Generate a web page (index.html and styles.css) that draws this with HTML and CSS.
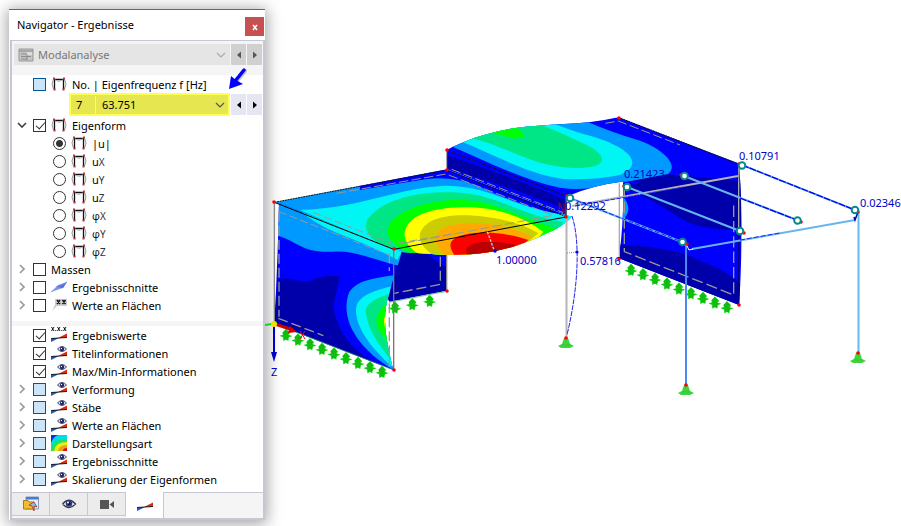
FILE: index.html
```html
<!DOCTYPE html>
<html lang="de">
<head>
<meta charset="utf-8">
<meta name="viewport" content="width=device-width, initial-scale=1">
<title>Navigator - Ergebnisse</title>
<link rel="stylesheet" href="styles.css">
</head>
<body>
<svg class="defs" width="0" height="0" aria-hidden="true">
  <symbol id="frame" viewBox="0 0 16 16">
    <path d="M2.500 3Q-.5 8 2.500 13M13.500 3Q16.500 8 13.500 13" fill="none" stroke="#999"/>
    <path d="M3.500 14V3.500H12.500V14" fill="none" stroke="#111" stroke-width="1.300"/>
    <path d="M4 4Q8 7 12 4" fill="none" stroke="#bbb"/>
    <path d="M2 1.500h2v2H2zM12 1.500h2v2h-2zM2.500 12.500h2v2h-2zM11.500 12.500h2v2h-2z" fill="#c8323c"/>
  </symbol>
  <symbol id="beam" viewBox="0 0 16 16">
    <path d="M0 10H8L0 14z" fill="#2456c8"/><path d="M7 10L16 5.500V10z" fill="#d62c10"/>
    <path d="M0 10.500L16 9.500" stroke="#222"/>
  </symbol>
  <symbol id="eyebeam" viewBox="0 0 16 16">
    <use href="#beam" y="1"/>
    <path d="M6.500 4Q11-1 15.500 4Q11 9 6.500 4" fill="#dde1ee" stroke="#45496c"/>
    <circle cx="11" cy="4" r="2.200" fill="#20275f"/><circle cx="10.500" cy="3.500" r=".7" fill="#fff"/>
  </symbol>
  <symbol id="eye" viewBox="0 0 16 16">
    <path d="M1.500 8Q8 .5 14.500 8Q8 15 1.500 8" fill="#fff" stroke="#333850" stroke-width="1.300"/>
    <circle cx="8" cy="7.500" r="3.300" fill="#303d8d"/><circle cx="8" cy="7.500" r="1.500" fill="#101438"/><circle cx="7" cy="6.500" r="1" fill="#fff"/>
  </symbol>
  <symbol id="plane" viewBox="0 0 16 16"><path d="M0 13L7 6L16 3L12 9z" fill="#809cff"/><path d="M5 8L16 3L12 9z" fill="#536bef"/><path d="M0 13L16 3" stroke="#8a8ca8" stroke-width=".8"/></symbol>
  <symbol id="flag" viewBox="0 0 16 16"><path d="M4 2H16V9H6L1 14L4 8z" fill="#ccc"/><path d="M6 3L9 7M9 3L6 7M11.500 3L14.500 7M14.500 3L11.500 7" stroke="#111" stroke-width="1.400"/></symbol>
  <symbol id="values" viewBox="0 0 16 16"><use href="#beam" y="1"/><path d="M.5 0L3 4M3 0L.5 4M6.500 0L9 4M9 0L6.500 4M12.500 0L15 4M15 0L12.500 4M4.300 3.500h1M10.300 3.500h1" stroke="#111"/></symbol>
  <symbol id="heat" viewBox="0 0 16 16"><path d="M0 0H16V16H0z" fill="#00dce8"/><path d="M0 0H7Q2 2 0 8z" fill="#1030d8"/><path d="M0 16Q0 4 16 4V16z" fill="#20e060"/><path d="M3 16Q4 7 16 7V16z" fill="#ecec10"/><path d="M7 16Q8 10 16 10V16z" fill="#e8a020"/><path d="M12 16Q12 13 16 13V16z" fill="#d81010"/></symbol>
  <symbol id="down" viewBox="0 0 10 10"><path d="M1 3L5 7L9 3" fill="none" stroke="currentColor" stroke-width="1.200"/></symbol>
  <symbol id="left" viewBox="0 0 10 10"><path d="M7 1.500V8.500L3 5z" fill="currentColor"/></symbol>
  <symbol id="right" viewBox="0 0 10 10"><path d="M3 1.500V8.500L7 5z" fill="currentColor"/></symbol>
  <symbol id="twist" viewBox="0 0 10 10"><path d="M3 1L7 5L3 9" fill="none" stroke="currentColor" stroke-width="1.700"/></symbol>
</svg>
<div class="app">
<aside class="panel">
  <header class="title"><h1>Navigator - Ergebnisse</h1><button class="close" aria-label="Schließen"><svg width="10" height="10"><path d="M3 3L7 8M7 3L3 8" stroke="#fff" stroke-width="1.500"/></svg></button></header>
  <div class="content">
    <div class="toolbar">
      <div class="combo disabled">
        <svg class="ico" viewBox="0 0 16 16" aria-hidden="true"><path d="M1 2H15V14H1z" fill="#c4c4c4" stroke="#999"/><path d="M1 4H15M3 7H8M3 9.500H13M3 12H9M9 6V13" stroke="#8b8b8b"/><path d="M9 5H14V8H9z" fill="#ddd"/></svg>
        <select aria-label="Analyse" disabled><option>Modalanalyse</option></select>
        <svg class="chev"><use href="#down"/></svg>
      </div>
      <button class="step gray" aria-label="Vorherige Analyse"><svg><use href="#left"/></svg></button>
      <button class="step gray" aria-label="Nächste Analyse"><svg><use href="#right"/></svg></button>
    </div>
    <div class="row"><span class="tw"></span><input type="checkbox" class="blue" id="c0"><svg class="ico"><use href="#frame"/></svg><label for="c0">No. | Eigenfrequenz f [Hz]</label></div>
    <div class="freq">
      <div class="combo yellow"><span class="num">7</span><select aria-label="Eigenfrequenz"><option>63.751</option></select><svg class="chev"><use href="#down"/></svg></div>
      <button class="step" aria-label="Vorherige Eigenform"><svg><use href="#left"/></svg></button>
      <button class="step" aria-label="Nächste Eigenform"><svg><use href="#right"/></svg></button>
      <svg class="pointer" viewBox="0 0 20 24" aria-hidden="true"><path d="M17 3L9 13" stroke="#777" stroke-width="4" opacity=".4" stroke-linecap="round"/><path d="M16 2L8 12" stroke="#00f" stroke-width="3.500" stroke-linecap="round"/><path d="M1 21L3 8L8 12L15 16z" fill="#00f"/></svg>
    </div>
    <div class="row"><span class="tw open"><svg><use href="#twist"/></svg></span><input type="checkbox" id="c1" checked><svg class="ico"><use href="#frame"/></svg><label for="c1">Eigenform</label></div>
    <div class="row sub"><input type="radio" name="m" id="r1" checked><svg class="ico"><use href="#frame"/></svg><label for="r1">|u|</label></div>
    <div class="row sub"><input type="radio" name="m" id="r2"><svg class="ico"><use href="#frame"/></svg><label for="r2">u<small>X</small></label></div>
    <div class="row sub"><input type="radio" name="m" id="r3"><svg class="ico"><use href="#frame"/></svg><label for="r3">u<small>Y</small></label></div>
    <div class="row sub"><input type="radio" name="m" id="r4"><svg class="ico"><use href="#frame"/></svg><label for="r4">u<small>Z</small></label></div>
    <div class="row sub"><input type="radio" name="m" id="r5"><svg class="ico"><use href="#frame"/></svg><label for="r5"><span class="phi">φ</span><small>X</small></label></div>
    <div class="row sub"><input type="radio" name="m" id="r6"><svg class="ico"><use href="#frame"/></svg><label for="r6"><span class="phi">φ</span><small>Y</small></label></div>
    <div class="row sub"><input type="radio" name="m" id="r7"><svg class="ico"><use href="#frame"/></svg><label for="r7"><span class="phi">φ</span><small>Z</small></label></div>
    <div class="row"><span class="tw"><svg><use href="#twist"/></svg></span><input type="checkbox" id="c2"><label for="c2">Massen</label></div>
    <div class="row"><span class="tw"><svg><use href="#twist"/></svg></span><input type="checkbox" id="c3"><svg class="ico"><use href="#plane"/></svg><label for="c3">Ergebnisschnitte</label></div>
    <div class="row"><span class="tw"><svg><use href="#twist"/></svg></span><input type="checkbox" id="c4"><svg class="ico"><use href="#flag"/></svg><label for="c4">Werte an Flächen</label></div>
    <div class="divider"></div>
    <div class="row"><span class="tw"></span><input type="checkbox" id="d1" checked><svg class="ico"><use href="#values"/></svg><label for="d1">Ergebniswerte</label></div>
    <div class="row"><span class="tw"></span><input type="checkbox" id="d2" checked><svg class="ico"><use href="#eyebeam"/></svg><label for="d2">Titelinformationen</label></div>
    <div class="row"><span class="tw"></span><input type="checkbox" id="d3" checked><svg class="ico"><use href="#eyebeam"/></svg><label for="d3">Max/Min-Informationen</label></div>
    <div class="row"><span class="tw"><svg><use href="#twist"/></svg></span><input type="checkbox" class="blue" id="d4"><svg class="ico"><use href="#eyebeam"/></svg><label for="d4">Verformung</label></div>
    <div class="row"><span class="tw"><svg><use href="#twist"/></svg></span><input type="checkbox" class="blue" id="d5"><svg class="ico"><use href="#eyebeam"/></svg><label for="d5">Stäbe</label></div>
    <div class="row"><span class="tw"><svg><use href="#twist"/></svg></span><input type="checkbox" class="blue" id="d6"><svg class="ico"><use href="#eyebeam"/></svg><label for="d6">Werte an Flächen</label></div>
    <div class="row"><span class="tw"><svg><use href="#twist"/></svg></span><input type="checkbox" class="blue" id="d7"><svg class="ico"><use href="#heat"/></svg><label for="d7">Darstellungsart</label></div>
    <div class="row"><span class="tw"><svg><use href="#twist"/></svg></span><input type="checkbox" class="blue" id="d8"><svg class="ico"><use href="#eyebeam"/></svg><label for="d8">Ergebnisschnitte</label></div>
    <div class="row"><span class="tw"><svg><use href="#twist"/></svg></span><input type="checkbox" class="blue" id="d9"><svg class="ico"><use href="#eyebeam"/></svg><label for="d9">Skalierung der Eigenformen</label></div>
    <nav class="tabs">
      <button aria-label="Daten"><svg class="ico" viewBox="0 0 16 16"><path d="M3 1H15.500V13H3z" fill="#e8eef8" stroke="#8899b4"/><path d="M3 1H15.500V3.500H3z" fill="#3f7ce0"/><path d="M.5 4.500H5L6 6H11V13H.5z" fill="#f2bd2c" stroke="#a97a14"/><path d="M6 9L11 6L14 11L11 10L11 15L9 10z" fill="#7fc4ec" stroke="#b03030" stroke-width=".8"/></svg></button>
      <button aria-label="Anzeige"><svg class="ico"><use href="#eye"/></svg></button>
      <button aria-label="Ansichten"><svg class="ico" viewBox="0 0 16 16"><path d="M1 4H10V13H1zM10.500 8.500L15 5V12z" fill="#555"/></svg></button>
      <button class="active" aria-label="Ergebnisse"><svg class="ico"><use href="#beam"/></svg></button>
    </nav>
  </div>
</aside>
<main class="view">
<svg class="scene" viewBox="265 0 636 526" preserveAspectRatio="xMinYMin meet" role="img" aria-label="Eigenform 7">
  <defs>
    <clipPath id="roofL"><path d="M-317 307L200 208L558 345L576 350Q550 380 500 400C400 450 310 466 200 465L65 456L40 448Z"/></clipPath>
    <clipPath id="roofR"><path d="M200 150C250 122 320 98 400 85C500 70 600 78 715 52L1075 190L1075 245H725Q640 255 558 290Z"/></clipPath>
    <clipPath id="wallR"><path d="M729 247L890 217L1078 195Q1092 400 1077 615L717 475Q733 350 729 247Z"/></clipPath>
    <clipPath id="wallL"><path d="M57 98L401 238L425 243C420 275 398 325 388 370C368 430 370 480 400 600L43 461Q53 280 57 98Z"/></clipPath>
    <g id="tree"><path d="M0-19L12-6L9 0L20 3L9 7L7 18L0 14L-8 18L-9 7L-20 2L-9-1L-11-7Z" fill="#1ee01e"/><path d="M0-17L11-6L6-3L7 8L5 16L-1 12L-7 16L-6 3L-10-7Z" fill="#10bb10"/><path d="M-16 2L0-1L16 3L0 9Z" fill="#12be12"/></g>
    <g id="cone"><path d="M-2-6H2L4 0L8 2L4 4H-5L-8 2L-4 0Z" fill="#38d838"/><path d="M-5 1H5" stroke="#55a955" stroke-width=".7"/><circle cy="-6" r="1.800" fill="red"/></g>
    <g id="hinge"><circle r="3.300" fill="#fff" stroke="#098888" stroke-width="2"/></g>
  </defs>

  <!-- rear leg -->
  <g transform="translate(260 170) scale(.33333)">
    <path d="M425 243L560 255V362L388 395L375 370Z" fill="#0000aa"/>
    <path d="M500 250L560 255V292Q535 280 500 250" fill="#00f"/>
    <path d="M560 255V364" stroke="#888" stroke-width="4"/>
    <path d="M541 260V343L403 370" fill="none" stroke="#999" stroke-width="4" stroke-dasharray="30 12"/>
    <path d="M388 397L560 364" stroke="#3bb45b" stroke-width="2"/>
    <use href="#tree" x="405" y="413"/><use href="#tree" x="457" y="403"/><use href="#tree" x="509" y="393"/>
  </g>

  <g transform="translate(380 100) scale(.33333)">
    <!-- right wall -->
    <g clip-path="url(#wallR)">
      <path d="M700 180H1100V640H700Z" fill="#00f"/>
      <path d="M725 262L890 215L1010 235L1095 230V386Q1000 395 930 370C870 340 830 300 725 262" fill="#0000aa"/>
      <path d="M710 433Q880 440 960 482Q1050 515 1090 560V650H710Z" fill="#0000aa"/>
      <path d="M725 285Q765 330 725 362Z" fill="#09f"/>
    </g>
    <path d="M733 260V455L1061 585V310" fill="none" stroke="#999" stroke-width="4" stroke-dasharray="34 12"/>
    <path d="M718 250V475M1076 193V400" stroke="#aaa" stroke-width="4"/>
    <path d="M1076 400V612" stroke="#008" stroke-width="4"/>
    <!-- step between the roofs -->
    <path d="M200 150L558 288V345L200 208Z" fill="#00f"/>
    <path d="M200 163L380 220L558 290V328L400 268L200 205Z" fill="#0000aa"/>
    <path d="M200 150L558 288V300Q400 232 200 165Z" fill="#00f"/>
    <!-- right roof -->
    <g clip-path="url(#roofR)">
      <path d="M180 40H1100V300H180Z" fill="#00f"/>
      <path d="M205 135C310 180 430 240 540 263Q620 275 725 248L858 226C905 200 850 147 780 122Q690 96 610 60L200 60Z" fill="#09f"/>
      <path d="M225 118C330 155 430 220 550 237Q650 240 720 225C800 190 740 140 640 110Q560 90 500 60L300 50Z" fill="#00f5f5"/>
      <path d="M250 110C370 130 430 188 550 202C690 215 690 168 620 135Q540 95 460 65L330 70Z" fill="#00e585"/>
      <path d="M335 98L400 80Q430 90 432 112Q395 121 370 105Q350 105 335 98" fill="#0f0"/>
      <path d="M725 248L860 223L1075 242V300H725Z" fill="#0000aa"/>
    </g>
    <!-- left roof -->
    <g clip-path="url(#roofL)">
      <path d="M-330 200H590V480H-330Z" fill="#09f"/>
      <path d="M-60 257L200 208L558 345V358Q370 295 300 260Q220 228 140 237Q60 250 -60 270Z" fill="#00f"/>
      <path d="M-240 330C-60 325 60 260 200 257C350 260 400 330 580 347V480H100L40 452Z" fill="#00f5f5"/>
      <path d="M50 450C-20 435-60 390-35 355C20 285 150 272 240 278C350 285 410 340 550 367L480 480H70Z" fill="#00e585"/>
      <path d="M100 463C20 430 5 395 40 358C80 320 180 295 255 300C350 308 400 345 525 384L460 480Z" fill="#0f0"/>
      <path d="M120 464C60 430 60 380 110 350C170 315 300 315 370 337Q440 355 490 396L420 480Z" fill="#ff0"/>
      <path d="M160 466C110 430 105 395 150 365C205 335 310 345 370 360Q430 372 475 400L380 480Z" fill="#cc0"/>
      <path d="M200 468C155 435 155 395 205 378C270 360 340 372 385 384Q430 395 455 412L360 480Z" fill="#fa0"/>
      <path d="M225 468C200 435 210 415 250 405C310 390 385 400 445 420L380 480Z" fill="#f00"/>
      <path d="M265 468C245 445 270 433 300 427Q360 420 410 437L330 480Z" fill="#b00"/>
    </g>
  </g>

  <!-- left wall -->
  <g transform="translate(260 170) scale(.33333)">
    <g clip-path="url(#wallL)">
      <path d="M40 90H440V610H40Z" fill="#00f"/>
      <path d="M50 90L440 240V292C350 275 290 240 220 245C120 250 110 210 50 197Z" fill="#09f"/>
      <path d="M120 120L430 238L412 270Q350 235 240 193Q160 160 120 120" fill="#00f5f5"/>
      <path d="M55 330C90 315 115 340 150 334Q180 315 237 318C238 360 208 400 230 450C255 520 310 570 400 600L40 470Z" fill="#0000aa"/>
      <path d="M402 316C340 325 295 330 268 365C235 450 300 540 398 598L430 480Z" fill="#09f"/>
      <path d="M397 348C360 358 305 370 290 405C275 470 350 550 396 590L430 480Z" fill="#00f5f5"/>
      <path d="M395 370C345 385 318 400 317 425C325 490 365 530 390 567L410 480Z" fill="#00e585"/>
      <path d="M383 397C345 430 340 460 365 491L382 518L400 440Z" fill="#0f0"/>
      <path d="M378 430Q365 455 380 485Z" fill="#ff0"/>
    </g>
    <path d="M43 97V461" stroke="#888" stroke-width="4"/><path d="M401 238V600" stroke="#777" stroke-width="4"/>
    <path d="M57 125V440M55 445L190 497M388 250V303M388 400V590" fill="none" stroke="#999" stroke-width="4" stroke-dasharray="30 12"/>
    <path d="M57 125L388 255M160 128L400 222L590 190" fill="none" stroke="#999" stroke-width="3" stroke-dasharray="24 10"/>
    <path d="M43 461L401 600" stroke="#3bb45b" stroke-width="2"/>
    <path d="M43 97L401 238L918 141" fill="none" stroke="#000" stroke-width="3"/>
    <use href="#tree" x="78" y="495"/><use href="#tree" x="114" y="509"/><use href="#tree" x="150" y="523"/><use href="#tree" x="186" y="537"/><use href="#tree" x="222" y="551"/><use href="#tree" x="258" y="565"/><use href="#tree" x="294" y="579"/><use href="#tree" x="330" y="592"/><use href="#tree" x="366" y="606"/>
  </g>

  <g transform="translate(380 100) scale(.33333)">
    <path d="M-317 307L200 210L558 350M200 150L558 288M715 52L1075 192" fill="none" stroke="#111" stroke-width="3" stroke-dasharray="6 2"/>
    <path d="M200 150V208" stroke="#aaa" stroke-width="3"/>
    <path d="M-130 280L198 222L520 346L60 432M215 208L550 338M676 70L715 63L900 135" fill="none" stroke="#999" stroke-width="3" stroke-dasharray="28 10"/>
    <path d="M322 395L343 452" stroke="#ccc" stroke-width="4" stroke-dasharray="8 4"/>
    <path d="M558 350V290" stroke="#444" stroke-width="5"/>
    <path d="M538 328V308L552 340V310" fill="none" stroke="#b00000" stroke-width="3"/>
    <use href="#tree" x="753" y="510"/><use href="#tree" x="789" y="523"/><use href="#tree" x="825" y="537"/><use href="#tree" x="861" y="551"/><use href="#tree" x="897" y="566"/><use href="#tree" x="933" y="580"/><use href="#tree" x="969" y="594"/><use href="#tree" x="1005" y="608"/><use href="#tree" x="1041" y="622"/>
  </g>

  <!-- frame members -->
  <g fill="none">
    <path d="M566.500 217V338M572 206L738 176" stroke="#b5b5b5" stroke-width="2"/>
    <path d="M572 216C580 240 579 285 567 335M575 206L684 187" stroke="#2222e8" stroke-width="1" stroke-dasharray="5 1"/>
    <path d="M567 253L577 252" stroke="#888" stroke-dasharray="1 1"/>
    <path d="M570 198L682 242M627 187L740 231M684 176L797 220M742 165L855 210M692 249L855 220" stroke="#66b4f0" stroke-width="2"/>
    <path d="M742 165L855 210M740 198L797 220" stroke="#00e" stroke-width="1.300" stroke-dasharray="7 1"/>
    <path d="M570 198L682 242M740 240L780 233" stroke="#00e" stroke-width=".8" stroke-dasharray="5 2"/>
    <path d="M686 245V386" stroke="#4888f8" stroke-width="2"/><path d="M858.500 212V353" stroke="#66b8f0" stroke-width="2"/>
    <path d="M686 244L689 250L693 249" stroke="#fff"/><path d="M858 212L855 220L854 217" stroke="#00a" stroke-width="1.500"/>
  </g>
  <g fill="red"><circle cx="274" cy="202" r="1.800"/><circle cx="394" cy="249" r="1.800"/><circle cx="394" cy="370" r="1.800"/><circle cx="447" cy="291" r="1.800"/><circle cx="447" cy="150" r="1.800"/><circle cx="447" cy="170" r="1.800"/><circle cx="566" cy="217" r="1.800"/><circle cx="567" cy="196" r="1.800"/><circle cx="619" cy="118" r="1.800"/><circle cx="619" cy="259" r="1.800"/><circle cx="739" cy="305" r="1.800"/><circle cx="739" cy="164" r="1.800"/><circle cx="624" cy="186" r="1.800"/><circle cx="681" cy="175" r="1.800"/><circle cx="744" cy="233" r="1.800"/><circle cx="801" cy="222" r="1.800"/><circle cx="687" cy="244" r="1.800"/><circle cx="858" cy="212" r="1.800"/></g>
  <g fill="#00e"><circle cx="495" cy="251" r="1.800"/><circle cx="577" cy="252" r="1.600"/></g>
  <use href="#hinge" x="570" y="198"/><use href="#hinge" x="627" y="187"/><use href="#hinge" x="684.500" y="176"/><use href="#hinge" x="742" y="165.500"/><use href="#hinge" x="682.500" y="242"/><use href="#hinge" x="740" y="231"/><use href="#hinge" x="797.500" y="220.500"/><use href="#hinge" x="855" y="210"/>
  <use href="#cone" x="566" y="344"/><use href="#cone" x="686" y="391"/><use href="#cone" x="858" y="359"/>

  <!-- coordinate axes -->
  <path d="M265 325L272 324" stroke="#10d810" stroke-width="2"/>
  <path d="M275 324L293 330" stroke="#c00" stroke-width="3"/><path d="M290 326L297 332L288 333Z" fill="#c00"/>
  <path d="M300 331L305 339M305 331L300 339" stroke="#f00"/>
  <path d="M274 326V356" stroke="#0000c8" stroke-width="2"/><path d="M271 352H277L274 362Z" fill="#0000c8"/>
  <circle cx="274" cy="324" r="3" fill="#f0e000"/>
  <g class="vals"><text x="271" y="376">Z</text><text x="496" y="264">1.00000</text><text x="580" y="265">0.57816</text><text x="565" y="210">0.12292</text><text x="624" y="178">0.21423</text><text x="739" y="160">0.10791</text><text x="860" y="207">0.02346</text></g>
</svg>
</main>
</div>
</body>
</html>
```
FILE: styles.css
```css
* { box-sizing: border-box; }
body { margin: 0; background: #fff; color: #000; font: 11px/18px "Noto Sans", "Open Sans", sans-serif; overflow: hidden; }
button, select { font: inherit; color: inherit; border: 0; padding: 0; margin: 0; border-radius: 0; }
.defs { position: absolute; }
.app { display: flex; align-items: flex-start; min-height: 100vh; padding: 9px 0 0 9px; }
.panel { flex: 0 0 256px; background: #fff; border-top: 1px solid #666; box-shadow: 0 2px 14px 2px rgba(0,0,0,.36); }
.title { display: flex; align-items: center; justify-content: space-between; height: 30px; padding-left: 8px; }
.title h1 { margin: 0; font-size: 11px; font-weight: 400; }
.close { display: grid; place-items: center; width: 19px; height: 19px; margin: 3px 1px 0 0; background: #c75050; }
.content { margin-left: 1px; border: 2px solid #c8c6d4; border-top-width: 1px; }
.toolbar { display: flex; gap: 1px; height: 34px; padding: 3px 1px 10px 2px; background: #f5f5f5; }
.combo { display: flex; flex: 1; align-items: center; min-width: 0; }
.combo select { flex: 1; min-width: 0; height: 100%; appearance: none; background: transparent; opacity: 1; }
.chev { width: 10px; height: 10px; margin-right: 4px; color: #555; }
.disabled { background: #e5e5e5; color: #777; padding-left: 4px; }
.disabled select { margin-left: 4px; color: #777; }
.disabled .chev { color: #aaa; }
.step { display: grid; place-items: center; width: 15px; background: #e6e6f2; color: #000; }
.step svg { width: 10px; height: 10px; }
.gray { background: #d0d0d0; color: #555; }
.freq { position: relative; display: flex; gap: 1px; height: 23px; padding: 0 1px 0 57px; }
.freq .step { height: 21px; align-self: center; }
.yellow { background: #e6e650; border: 2px solid #ffff50; }
.num { width: 25px; padding-left: 5px; border-right: 1px solid #ffff50; }
.yellow select { padding-left: 6px; }
.yellow .chev { margin-right: 3px; }
.pointer { position: absolute; right: 15px; top: -25px; width: 20px; height: 24px; }
.row { display: flex; align-items: center; height: 18px; padding-left: 5px; }
.sub { padding-left: 41px; }
.tw { display: grid; place-items: center; width: 10px; margin-right: 6px; color: #999; }
.tw svg { width: 10px; height: 10px; }
.open { color: #444; transform: rotate(90deg); }
.row input { appearance: none; flex: none; width: 13px; height: 13px; margin: 0 5px 0 0; border: 1px solid #333; background: #fff; }
.row input[type="radio"] { border-radius: 50%; }
.row input[type="radio"]:checked { background: radial-gradient(circle, #333 0 3px, #fff 4px); }
.row input[type="checkbox"]:checked::before { content: ""; display: block; width: 4px; height: 8px; margin: 0 0 0 4px; border: solid #333; border-width: 0 1px 1px 0; transform: rotate(42deg); }
.row input.blue { background: #cce4f7; border-color: #0057a0; }
.ico { flex: none; width: 16px; height: 16px; }
.row .ico { margin-right: 5px; }
.row label { padding-top: 2px; white-space: nowrap; }
.row small { font-size: 10px; color: #333; }
.phi { font-family: "Open Sans", "Liberation Sans", sans-serif; }
.divider { height: 5px; margin: 7px 0 0; background: #f5f5f5; }
.tabs { display: flex; height: 26px; margin-top: 4px; background: #f5f5f5; border-top: 1px solid #c8c6d4; }
.tabs button { display: grid; place-items: center; width: 38px; height: 23px; background: #ececec; border-right: 1px solid #c8c6d4; border-bottom: 1px solid #c8c6d4; }
.tabs .active { height: 26px; margin-top: -1px; background: #fff; border-bottom: 0; }
.view { flex: 1; min-width: 0; margin-top: -9px; }
.scene { position: relative; display: block; width: 100%; height: auto; }
.vals { fill: #0000c8; font-size: 11px; }
```
